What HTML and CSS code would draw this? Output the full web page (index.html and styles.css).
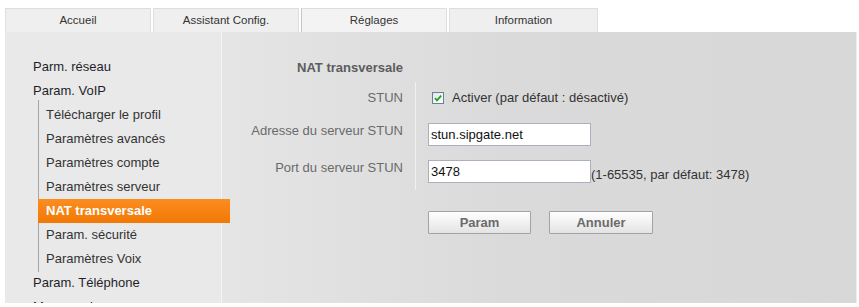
FILE: index.html
```html
<!DOCTYPE html>
<html lang="fr">
<head>
    <meta charset="UTF-8">
    <title>Réglages - NAT transversale</title>
    <link rel="stylesheet" href="styles.css">
</head>
<body>
    <div class="tabs">
        <div class="tab">Accueil</div>
        <div class="tab">Assistant Config.</div>
        <div class="tab active">Réglages</div>
        <div class="tab">Information</div>
    </div>
    <div class="frame">
        <div class="sidebar">
            <ul class="menu">
                <li>Parm. réseau</li>
                <li>Param. VoIP
                    <ul class="submenu">
                        <li>Télécharger le profil</li>
                        <li>Paramètres avancés</li>
                        <li>Paramètres compte</li>
                        <li>Paramètres serveur</li>
                        <li class="current">NAT transversale</li>
                        <li>Param. sécurité</li>
                        <li>Paramètres Voix</li>
                    </ul>
                </li>
                <li>Param. Téléphone</li>
                <li>Messagerie</li>
            </ul>
        </div>
        <div class="main">
            <div class="heading">NAT transversale</div>
            <div class="rows">
                <div class="row row-stun">
                    <div class="label">STUN</div>
                    <div class="field">
                        <svg class="check" width="12" height="12" viewBox="0 0 12 12">
                            <defs>
                                <linearGradient id="cb" x1="0" y1="0" x2="1" y2="1">
                                    <stop offset="0" stop-color="#dfe6ee"/>
                                    <stop offset="1" stop-color="#ffffff"/>
                                </linearGradient>
                            </defs>
                            <rect x="0.5" y="0.5" width="11" height="11" fill="url(#cb)" stroke="#6d7f92"/>
                            <path d="M3 6.2 L5 8.3 L9.2 3.6" fill="none" stroke="#21a121" stroke-width="1.8"/>
                        </svg>
                        <span>Activer (par défaut : désactivé)</span>
                    </div>
                </div>
                <div class="row row-addr">
                    <div class="label">Adresse du serveur STUN</div>
                    <div class="field">
                        <input type="text" value="stun.sipgate.net">
                    </div>
                </div>
                <div class="row row-port">
                    <div class="label">Port du serveur STUN</div>
                    <div class="field field-port">
                        <input type="text" value="3478">
                        <span class="hint">(1-65535, par défaut: 3478)</span>
                    </div>
                </div>
            </div>
            <div class="actions">
                <button class="btn btn-param">Param</button>
                <button class="btn btn-cancel">Annuler</button>
            </div>
        </div>
    </div>
</body>
</html>
```

FILE: styles.css
```css
body {
    margin: 0;
    padding: 8px 0 0 5px;
    background-color: #fff;
    font-family: "Liberation Sans", Arial, sans-serif;
    font-size: 13px;
    color: #222;
}

.tabs {
    display: flex;
    gap: 2px;
    height: 24px;
}
.tab {
    width: 144px;
    height: 23px;
    line-height: 23px;
    text-align: center;
    font-size: 11.5px;
    color: #333;
    background-color: #efefef;
    border: 1px solid #dedede;
    border-bottom: none;
}
.tab.active {
    background-color: #f3f3f3;
    border-left-color: #c4c4c4;
    height: 24px;
}
.tab:last-child {
    width: 147px;
}

.frame {
    display: flex;
    width: 851px;
    height: 271px;
    overflow: hidden;
    border-right: 1px solid #ececec;
    background-color: #d9d9d9;
}

.sidebar {
    width: 216px;
    flex: none;
    padding-top: 23px;
    padding-left: 28px;
    box-sizing: border-box;
    width: 217px;
    background-color: #e9e9e9;
    border-right: 1px solid #f4f4f4;
}
.menu, .submenu {
    list-style: none;
    margin: 0;
    padding: 0;
}
.menu li {
    line-height: 24px;
    color: #1f1f2a;
    white-space: nowrap;
}
.submenu {
    margin: -3px 0 -1px 5px;
    padding: 3px 0 1px 0;
    border-left: 1px solid #a6a6a6;
}
.submenu li {
    padding-left: 7px;
    color: #333;
}
.submenu li.current {
    position: relative;
    z-index: 1;
    margin-left: -1px;
    margin-right: -9px;
    padding-left: 8px;
    color: #fff;
    font-weight: bold;
    background: linear-gradient(to bottom, #fb8d20, #f27905);
}

.main {
    flex: 1;
    padding-top: 24px;
    background: linear-gradient(to right, #e5e5e5 0%, #dadada 45%, #d8d8d8 100%);
}
.heading {
    width: 181px;
    text-align: right;
    line-height: 24px;
    margin-bottom: 2px;
    font-weight: bold;
    color: #5c5c5c;
}

.row {
    display: flex;
}
.label {
    width: 181px;
    margin-right: 12px;
    flex: none;
    text-align: right;
    line-height: 16px;
    color: #6a6a6a;
}
.field {
    display: flex;
    align-items: center;
    padding-left: 12px;
    border-left: 1px solid #f1f1f1;
    color: #333;
}
.row-stun .label,
.row-stun .field {
    padding-top: 8px;
    padding-bottom: 8px;
    line-height: 16px;
}
.row-stun .field {
    align-items: center;
}
.check {
    margin-right: 8px;
    margin-left: 4px;
}
.row-addr .label,
.row-addr .field {
    padding-top: 9px;
    padding-bottom: 6px;
}
.row-port .label,
.row-port .field {
    padding-top: 8px;
    padding-bottom: 7px;
}
.field-port {
    align-items: flex-end;
}
.hint {
    line-height: 16px;
    color: #333;
}

input {
    width: 163px;
    height: 23px;
    box-sizing: border-box;
    margin: 0;
    padding: 0 2px;
    border: 1px solid #a9b1bd;
    background-color: #fff;
    font-family: "Liberation Sans", Arial, sans-serif;
    font-size: 13px;
    color: #111;
}

.actions {
    display: flex;
    gap: 18px;
    margin-top: 21px;
    padding-left: 206px;
}
.btn {
    height: 23px;
    border: 1px solid #a3a3a3;
    border-radius: 1px;
    background: linear-gradient(to bottom, #ffffff, #e3e3e3);
    font-family: "Liberation Sans", Arial, sans-serif;
    font-size: 13px;
    font-weight: bold;
    color: #6b6b6b;
    padding: 0;
}
.btn-param {
    width: 103px;
}
.btn-cancel {
    width: 104px;
}
```
